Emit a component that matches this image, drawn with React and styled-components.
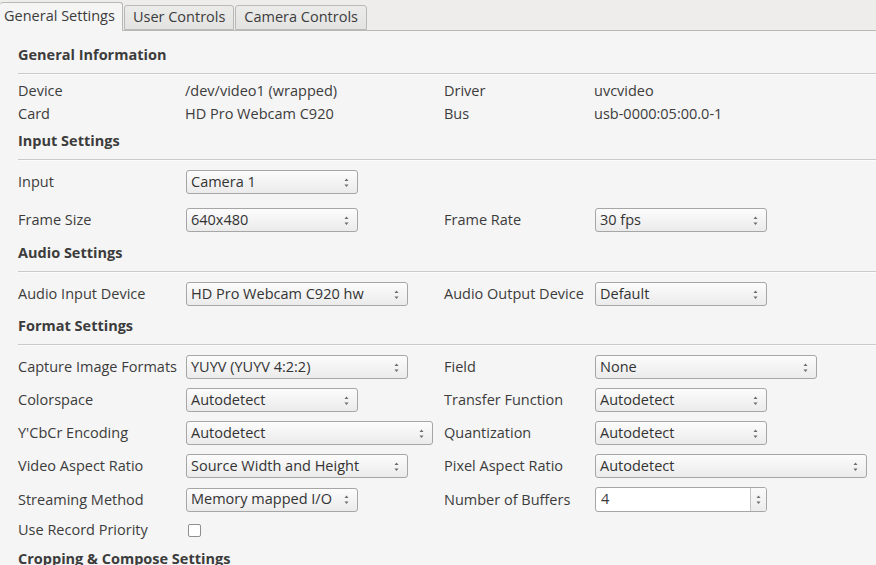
import React from "react";
import styled, { createGlobalStyle } from "styled-components";

const GlobalStyle = createGlobalStyle`
  html, body {
    margin: 0;
    padding: 0;
    background: #f5f5f5;
  }
  body {
    font-family: "Open Sans", "Noto Sans", sans-serif;
    font-size: 14.5px;
    color: #3c3c3c;
  }
`;

const Window = styled.div`
  width: 876px;
  height: 565px;
  overflow: hidden;
  background: #f5f5f5;
`;

const TabBar = styled.div`
  display: flex;
  align-items: flex-end;
  height: 31px;
  background: #eeedeb;
  border-bottom: 1px solid #b9b9b7;
  box-sizing: border-box;
`;

const Tab = styled.div`
  box-sizing: border-box;
  height: ${(p) => (p.$active ? "29px" : "25px")};
  margin-bottom: ${(p) => (p.$active ? "-1px" : "0")};
  display: flex;
  align-items: center;
  padding: ${(p) => (p.$active ? "0 7px 1px 4px" : "0 8px")};
  background: ${(p) =>
    p.$active ? "#f5f5f5" : "linear-gradient(#ebebea, #e3e3e2)"};
  border: 1px solid #b9b9b7;
  border-bottom: ${(p) => (p.$active ? "none" : "1px solid #b9b9b7")};
  border-left: ${(p) => (p.$first ? "none" : "1px solid #b9b9b7")};
  border-radius: 3px 3px 0 0;
  margin-right: 1px;
  white-space: nowrap;
  line-height: 1;
`;

const Content = styled.div`
  padding-left: 18px;
`;

const SectionTitle = styled.div`
  height: 20px;
  line-height: 20px;
  font-weight: 700;
  margin-top: ${(p) => p.$top}px;
`;

const Rule = styled.div`
  margin-top: 8px;
  height: 1px;
  background: #cacaca;
  border-bottom: 1px solid #fbfbfb;
`;

const Body = styled.div`
  padding-top: ${(p) => p.$pad}px;
  display: flex;
  flex-direction: column;
  gap: ${(p) => p.$gap}px;
`;

const Row = styled.div`
  display: grid;
  grid-template-columns: 167px 259px 150px 1fr;
  align-items: center;
  height: ${(p) => p.$h || 24}px;
  margin-bottom: ${(p) => p.$extra || 0}px;
  white-space: nowrap;
`;

const Label = styled.span`
  line-height: 1;
  padding-top: 1px;
`;

const Combo = styled.div`
  box-sizing: border-box;
  margin-left: 1px;
  width: ${(p) => p.$w}px;
  height: 24px;
  border: 1px solid #a6a6a6;
  border-radius: 3px;
  background: linear-gradient(#fcfcfc, #ebebeb);
  display: flex;
  align-items: center;
  justify-content: space-between;
  padding: 0 7px 0 4px;
  color: #333;
  line-height: 1;
`;

const Arrows = () => (
  <svg width="7" height="11" viewBox="0 0 7 11">
    <path d="M1.5 4 L3.5 1.5 L5.5 4 Z" fill="#6b6b6b" />
    <path d="M1.5 7.5 L3.5 10 L5.5 7.5 Z" fill="#6b6b6b" />
  </svg>
);

const Spin = styled.div`
  box-sizing: border-box;
  margin-left: 1px;
  width: 172px;
  height: 25px;
  border: 1px solid #a6a6a6;
  border-radius: 3px;
  background: #fff;
  display: flex;
  overflow: hidden;
`;

const SpinValue = styled.div`
  flex: 1;
  display: flex;
  align-items: center;
  padding-left: 5px;
  line-height: 1;
`;

const SpinButtons = styled.div`
  width: 15px;
  border-left: 1px solid #c6c6c6;
  background: linear-gradient(#fafafa, #ececec);
  display: flex;
  align-items: center;
  justify-content: center;
`;

const Check = styled.div`
  margin-left: 3px;
  width: 13px;
  height: 13px;
  box-sizing: border-box;
  border: 1px solid #8e8e8e;
  border-radius: 2px;
  background: #fff;
`;

const Select = ({ w, children }) => (
  <Combo $w={w}>
    <span>{children}</span>
    <Arrows />
  </Combo>
);

export default function App() {
  return (
    <Window>
      <GlobalStyle />
      <TabBar>
        <Tab $active $first>General Settings</Tab>
        <Tab>User Controls</Tab>
        <Tab>Camera Controls</Tab>
      </TabBar>
      <Content>
        <SectionTitle $top={14}>General Information</SectionTitle>
        <Rule />
        <Body $pad={4} $gap={0}>
          <Row $h={23}>
            <Label>Device</Label>
            <Label>/dev/video1 (wrapped)</Label>
            <Label>Driver</Label>
            <Label>uvcvideo</Label>
          </Row>
          <Row $h={23}>
            <Label>Card</Label>
            <Label>HD Pro Webcam C920</Label>
            <Label>Bus</Label>
            <Label>usb-0000:05:00.0-1</Label>
          </Row>
        </Body>

        <SectionTitle $top={6}>Input Settings</SectionTitle>
        <Rule />
        <Body $pad={9} $gap={9}>
          <Row $extra={5}>
            <Label>Input</Label>
            <Select w={172}>Camera 1</Select>
          </Row>
          <Row>
            <Label>Frame Size</Label>
            <Select w={172}>640x480</Select>
            <Label>Frame Rate</Label>
            <Select w={172}>30 fps</Select>
          </Row>
        </Body>

        <SectionTitle $top={11}>Audio Settings</SectionTitle>
        <Rule />
        <Body $pad={9} $gap={9}>
          <Row>
            <Label>Audio Input Device</Label>
            <Select w={222}>HD Pro Webcam C920 hw</Select>
            <Label>Audio Output Device</Label>
            <Select w={172}>Default</Select>
          </Row>
        </Body>

        <SectionTitle $top={10}>Format Settings</SectionTitle>
        <Rule />
        <Body $pad={9} $gap={9}>
          <Row>
            <Label>Capture Image Formats</Label>
            <Select w={222}>YUYV (YUYV 4:2:2)</Select>
            <Label>Field</Label>
            <Select w={222}>None</Select>
          </Row>
          <Row>
            <Label>Colorspace</Label>
            <Select w={172}>Autodetect</Select>
            <Label>Transfer Function</Label>
            <Select w={172}>Autodetect</Select>
          </Row>
          <Row>
            <Label>Y'CbCr Encoding</Label>
            <Select w={247}>Autodetect</Select>
            <Label>Quantization</Label>
            <Select w={172}>Autodetect</Select>
          </Row>
          <Row>
            <Label>Video Aspect Ratio</Label>
            <Select w={222}>Source Width and Height</Select>
            <Label>Pixel Aspect Ratio</Label>
            <Select w={272}>Autodetect</Select>
          </Row>
          <Row>
            <Label>Streaming Method</Label>
            <Select w={172}>Memory mapped I/O</Select>
            <Label>Number of Buffers</Label>
            <Spin>
              <SpinValue>4</SpinValue>
              <SpinButtons>
                <Arrows />
              </SpinButtons>
            </Spin>
          </Row>
          <Row $h={20}>
            <Label>Use Record Priority</Label>
            <Check />
          </Row>
        </Body>

        <SectionTitle $top={9}>Cropping &amp; Compose Settings</SectionTitle>
      </Content>
    </Window>
  );
}
